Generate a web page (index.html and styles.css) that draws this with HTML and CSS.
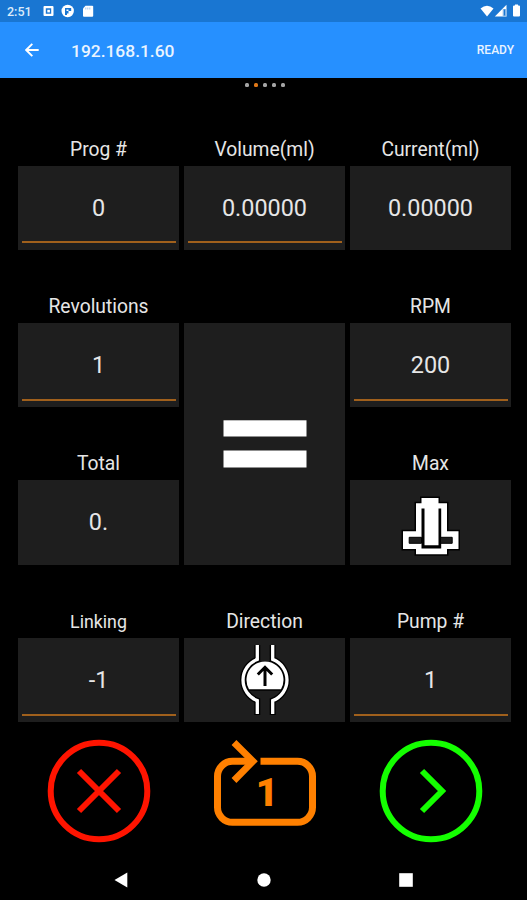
FILE: index.html
```
<!DOCTYPE html>
<html lang="en">
<head>
  <meta charset="UTF-8" />
  <meta name="viewport" content="width=device-width, initial-scale=1.0"/>
  <title>Pump control</title>
  <link rel="stylesheet" href="styles.css">
</head>
<body>
  <div class="statusbar">
    <span class="clock">2:51</span>
    <svg class="notif" width="52" height="14" viewBox="0 0 52 14">
      <path fill="#fff" fill-rule="evenodd" d="M1.5 2h8a1 1 0 0 1 1 1v8a1 1 0 0 1-1 1h-8a1 1 0 0 1-1-1V3a1 1 0 0 1 1-1zM2.800 4.300v5.400h5.400V4.300z"/>
      <rect x="4.300" y="5.800" width="2.600" height="2.600" fill="#fff"/>
      <circle cx="24.700" cy="7" r="6.200" fill="#fff"/>
      <path d="M22 4h6.200v3h-2.700v2.500h-1.500v1.500h-2z" fill="#1976d2"/>
      <path d="M23.500 5.500h2v1.500h-2z" fill="#fff"/>
      <path d="M42.500 1.700h6.700a1 1 0 0 1 1 1v9a1 1 0 0 1-1 1h-8.200a1 1 0 0 1-1-1V4.500z" fill="#fff"/>
      <path d="M42.800 3.500v2M44.800 3.500v2M46.800 3.500v2" stroke="#8fbde9" stroke-width=".8"/>
    </svg>
    <svg class="signal" width="41" height="14" viewBox="0 0 41 14">
      <path d="M.5 4.500Q7 -1 13.500 4.500L7 12.500z" fill="#fff"/>
      <path d="M26.500 .8v11.700H14.800z" fill="#fff"/>
      <path d="M22.700 5h3.800v7.500h-3.800z" fill="#8fbde9"/>
      <path d="M24.500 5.500v6" stroke="#1976d2" stroke-width="1.200"/>
      <path d="M34 1.500h1V.5h3v1h1a1 1 0 0 1 1 1v9a1 1 0 0 1-1 1h-5a1 1 0 0 1-1-1v-9a1 1 0 0 1 1-1z" fill="#fff"/>
    </svg>
  </div>

  <header>
    <svg class="back" width="14" height="14" viewBox="0 0 14 14">
      <path d="M13.700 7H1.500M7.300 .8L1.200 7l6.100 6.200" fill="none" stroke="#fff" stroke-width="1.900"/>
    </svg>
    <h1>192.168.1.60</h1>
    <span class="ready">READY</span>
  </header>

  <div class="dots"><i></i><i class="active"></i><i></i><i></i><i></i></div>

  <main class="panel">
    <div class="field"><label>Prog #</label><div class="box edit">0</div></div>
    <div class="field"><label>Volume(ml)</label><div class="box edit">0.00000</div></div>
    <div class="field"><label>Current(ml)</label><div class="box">0.00000</div></div>

    <div class="field"><label>Revolutions</label><div class="box edit">1</div></div>
    <div class="field tall">
      <div class="box">
        <svg width="84" height="50" viewBox="0 0 84 50" fill="#fff">
          <rect x=".5" y="1.300" width="83" height="16.200"/>
          <rect x=".5" y="31.500" width="83" height="17"/>
        </svg>
      </div>
    </div>
    <div class="field"><label>RPM</label><div class="box edit">200</div></div>

    <div class="field"><label>Total</label><div class="box">0.</div></div>
    <div class="field">
      <label>Max</label>
      <div class="box">
        <svg class="max" width="56" height="60" viewBox="0 0 56 60">
          <path d="M18.500 2h17v5.300H44v28h11.500V53H44v5.300H13V53H0V35.300h13v-28h5.500z" fill="#fff" stroke="#000" stroke-width="3" paint-order="stroke"/>
          <path d="M18.500 12.600h3v36.700h14V12.600h2.700v40H18.500z" fill="#000"/>
          <path d="M6.200 41.300h12.300v6H6.200zM37.500 41.300h11.700v6H37.500z" fill="#1e1e1e" stroke="#000"/>
        </svg>
      </div>
    </div>

    <div class="field"><label class="small">Linking</label><div class="box edit">-1</div></div>
    <div class="field">
      <label>Direction</label>
      <div class="box">
        <svg width="50" height="72" viewBox="0 0 50 72">
          <g fill="none" stroke="#000" stroke-width="6">
            <path d="M17.300 1v14.400A22 22 0 0 0 17.300 56.600V71M32.700 1v14.400A22 22 0 0 1 32.700 56.600V71"/>
          </g>
          <path d="M7.500 46.700a20 20 0 1 1 35 0z" fill="#000"/>
          <g fill="none" stroke="#fff" stroke-width="3.300">
            <path d="M17.300 1v14.400A22 22 0 0 0 17.300 56.600V70M32.700 1v14.400A22 22 0 0 1 32.700 56.600V70"/>
          </g>
          <path d="M9 45.200a18.500 18.500 0 1 1 32 0z" fill="#fff"/>
          <path d="M25 42V23M17.800 30.500L25 23.300l7.200 7.200" fill="none" stroke="#000" stroke-width="3"/>
        </svg>
      </div>
    </div>
    <div class="field"><label>Pump #</label><div class="box edit">1</div></div>
  </main>

  <div class="actions">
    <svg width="104" height="104" viewBox="0 0 104 104" fill="none" stroke="#ff1400" stroke-width="6">
      <circle cx="52" cy="52" r="48.300"/>
      <path d="M32 32l40 40M72 32L32 72"/>
    </svg>
    <svg width="104" height="104" viewBox="0 0 104 104" fill="none" stroke="#ff8000" stroke-width="7">
      <path d="M40 22.300H19.500A15 15 0 0 0 4.500 37.300V68.300A15 15 0 0 0 19.500 83.300H84.500A15 15 0 0 0 99.500 68.300V37.300A15 15 0 0 0 84.500 22.300H47.500"/>
      <path d="M21 3.500L40 22.300 21 41.500" stroke-width="6.800"/>
      <text x="54" y="67" class="count">1</text>
    </svg>
    <svg width="104" height="104" viewBox="0 0 104 104" fill="none" stroke="#14ff00" stroke-width="6">
      <circle cx="52" cy="52" r="48.300"/>
      <path d="M43 32l20 20-20 20"/>
    </svg>
  </div>

  <nav class="navbar">
    <svg width="14" height="16" viewBox="0 0 14 16" fill="#fff"><path d="M.5 8L13.300 .5v15z"/></svg>
    <svg width="14" height="16" viewBox="0 0 14 16" fill="#fff"><circle cx="7" cy="8" r="6.700"/></svg>
    <svg width="14" height="16" viewBox="0 0 14 16" fill="#fff"><rect x=".2" y="1.200" width="13.600" height="13.600"/></svg>
  </nav>
</body>
</html>
```
FILE: styles.css
```
body {
  margin: 0;
  height: 900px;
  background: #000;
  color: #e6e6e6;
  font-family: Roboto, sans-serif;
  overflow: hidden;
}
.statusbar {
  display: flex;
  align-items: center;
  box-sizing: border-box;
  height: 22px;
  padding: 0 6px 0 7px;
  background: #1976d2;
}
.clock {
  width: 36px;
  color: #dcebfa;
  font-size: 12.5px;
  font-weight: 500;
}
.signal {
  margin-left: auto;
}
header {
  display: flex;
  align-items: center;
  box-sizing: border-box;
  height: 56px;
  padding: 0 13px 0 25px;
  background: #2690ff;
  color: #eaf4ff;
}
header h1 {
  margin: 1px 0 0 32px;
  font-size: 17.4px;
  font-weight: 500;
}
.ready {
  margin-left: auto;
  font-size: 12px;
  font-weight: 500;
}
.dots {
  display: flex;
  justify-content: center;
  gap: 5.2px;
  height: 14.5px;
  padding-left: 3px;
}
.dots i {
  width: 4px;
  height: 4px;
  margin-top: 5px;
  border-radius: 1.5px;
  background: #a5a5a5;
}
.dots .active {
  background: #e07818;
}
.panel {
  display: grid;
  grid-template-columns: repeat(3, 161px);
  grid-template-rows: repeat(4, 157.4px);
  column-gap: 5px;
  padding-left: 18px;
}
.field {
  display: flex;
  flex-direction: column;
  justify-content: flex-end;
}
.field label {
  margin-bottom: 3px;
  font-size: 19.3px;
  line-height: 26px;
  text-align: center;
}
.field .small {
  font-size: 17.8px;
}
.box {
  position: relative;
  display: flex;
  align-items: center;
  justify-content: center;
  height: 84.4px;
  background: #1e1e1e;
  font-size: 23.4px;
}
.edit::after {
  content: "";
  position: absolute;
  left: 4px;
  right: 3px;
  bottom: 6.5px;
  height: 2px;
  background: #a0601c;
}
.tall {
  grid-row: span 2;
}
.tall .box {
  height: 241.8px;
}
.max {
  margin-top: 7px;
  overflow: visible;
}
.actions {
  display: grid;
  grid-template-columns: repeat(3, 161px);
  column-gap: 5px;
  justify-items: center;
  padding: 16.6px 0 0 18px;
}
.count {
  font-size: 39px;
  font-weight: 900;
  text-anchor: middle;
  fill: #ff8000;
  stroke: none;
}
.navbar {
  display: flex;
  justify-content: center;
  gap: 128.5px;
  margin-top: 29px;
}
```
